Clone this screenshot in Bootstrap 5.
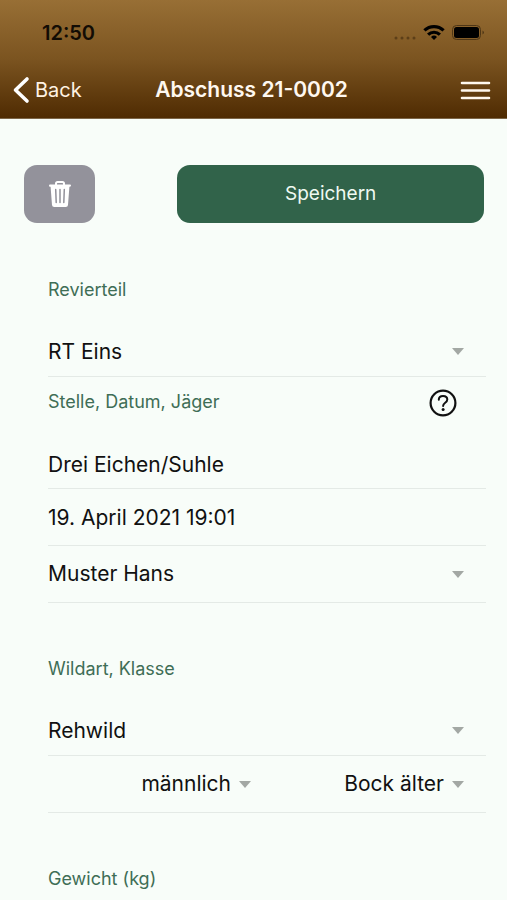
<!DOCTYPE html>
<html lang="de">
<head>
<meta charset="utf-8">
<meta name="viewport" content="width=device-width, initial-scale=1">
<title>Abschuss 21-0002</title>
<link href="https://cdn.jsdelivr.net/npm/bootstrap@5.3.0/dist/css/bootstrap.min.css" rel="stylesheet">
<style>
  body { background: #f8fdf9; color: #111; font-family: Inter, "Liberation Sans", sans-serif; font-size: 21px; line-height: 28px; }
  .app-header { background: linear-gradient(#986f35, #7b5420 50%, #4f2b02); height: 119px; border-bottom: 1px solid #7d6647; }
  .status-line { height: 62px; padding: 4px 23px 0 42px; color: #120c04; }
  .clock { font-size: 20px; font-weight: 600; }
  .title-line { height: 56px; padding: 0 16px 0 12px; color: #fff8f0; }
  .title-line h1 { font-size: 21px; line-height: 28px; font-weight: 600; }
  .side { flex: 1 1 0; }
  .back-link, .back-link:hover { color: #fff3e4; font-size: 20px; }
  .actions { padding: 46px 23px 0 24px; }
  .btn-delete, .btn-save { height: 58px; border-radius: 13px; border: 0; }
  .btn-delete, .btn-delete:hover { width: 71px; background: #93929b; }
  .btn-save, .btn-save:hover { background: #31634a; color: #effaf2; font-size: 19px; }
  .entry-form { padding: 2px 21px 0 48px; }
  .field-group { padding-top: 40px; }
  .field-group + .field-group { padding-top: 41px; }
  .field-group + .joined-group { padding-top: 0; }
  .caption-line { height: 61px; padding-top: 12px; }
  .caption-line label, .caption-line span { font-size: 18px; line-height: 26px; color: #3f6e56; }
  .field-line { border-bottom: 1px solid #e4eae6; }
  .entry { height: 56px; padding: 0; border: 0; border-radius: 0; background-color: transparent; color: #111; font-size: 21px; line-height: 28px; }
  .entry:focus { background-color: transparent; box-shadow: inset 0 -2px #31634a; }
  .entry-low { height: 50px; padding-top: 2px; }
  select.entry { padding-right: 42px; background-image: url("data:image/svg+xml,%3Csvg xmlns='http://www.w3.org/2000/svg' viewBox='0 0 12 7'%3E%3Cpath d='M0 0h12L6 7z' fill='%23a3a8a4'/%3E%3C/svg%3E"); background-size: 12px 7px; background-position: right 22px center; }
  .pair { padding-left: 12px; }
  .pair .entry { text-align-last: right; flex: 1 1 0; min-width: 0; }
  .help-btn { margin-right: 29px; }
</style>
<script src="https://cdn.jsdelivr.net/npm/bootstrap@5.3.0/dist/js/bootstrap.bundle.min.js"></script>
</head>
<body>
<header class="app-header">
  <div class="status-line d-flex align-items-center justify-content-between">
    <span class="clock">12:50</span>
    <div class="d-flex align-items-center">
      <svg width="91" height="18" viewBox="0 0 91 18" role="img" aria-label="WLAN, Akku voll">
        <g fill="#5c3f18"><circle cx="3" cy="14" r="1.500"/><circle cx="9" cy="14" r="1.500"/><circle cx="15" cy="14" r="1.500"/><circle cx="21" cy="14" r="1.500"/></g>
        <g fill="none" stroke="#000" stroke-width="3.2"><path d="M31.4 6.4a14 14 0 0 1 19.2 0"/><path d="M35.1 10.6a8.6 8.6 0 0 1 11.8 0"/></g>
        <path d="M41 16l-3-3.1a4.4 4.4 0 0 1 6 0z" fill="#000"/>
        <rect x="59.500" y="1.500" width="28" height="14" rx="4" fill="none" stroke="#4e3616"/>
        <rect x="61" y="3" width="25" height="11" rx="2.500" fill="#000"/>
        <path d="M89.500 6.500q3 2 0 4z" fill="#4e3616"/>
      </svg>
    </div>
  </div>
  <nav class="title-line d-flex align-items-center">
    <div class="side d-flex">
      <a href="#" class="back-link d-flex align-items-center gap-1 text-decoration-none">
        <svg width="19" height="28" viewBox="0 0 19 28" fill="none" stroke="#fff" stroke-width="3.600" stroke-linecap="round" stroke-linejoin="round" aria-hidden="true"><path d="M15 3L3.500 14 15 25"/></svg>
        Back
      </a>
    </div>
    <h1 class="mb-0 text-nowrap">Abschuss 21-0002</h1>
    <div class="side d-flex justify-content-end">
      <button type="button" class="btn p-0 border-0 d-flex" aria-label="Menü">
        <svg width="31" height="20" viewBox="0 0 31 20" stroke="#fff8ee" stroke-width="2.600" stroke-linecap="round" aria-hidden="true"><path d="M2 3h27M2 10.500h27M2 18h27"/></svg>
      </button>
    </div>
  </nav>
</header>

<main>
  <div class="actions">
    <div class="row g-0 justify-content-between">
      <div class="col-auto">
        <button type="button" class="btn btn-delete p-0 d-flex align-items-center justify-content-center" aria-label="Löschen">
          <svg width="24" height="28" viewBox="0 0 24 28" aria-hidden="true">
            <path d="M8 5V3.600Q8 2 9.600 2h4.800Q16 2 16 3.600V5" fill="none" stroke="#fff" stroke-width="2"/>
            <path d="M1 5.500Q1 4.500 2 4.500h20q1 0 1 1T22 6.800h-.600L20 25q-.200 2-2.200 2H6.200Q4.200 27 4 25L2.600 6.800H2Q1 6.800 1 5.500z" fill="#fff"/>
            <path d="M7.700 9.500l.500 13M12 9.500v13M16.300 9.500l-.500 13" stroke="#93929b" stroke-width="1.500" stroke-linecap="round"/>
          </svg>
        </button>
      </div>
      <div class="col-8">
        <button type="submit" form="entry" class="btn btn-save w-100 p-0">Speichern</button>
      </div>
    </div>
  </div>

  <form id="entry" class="entry-form">
    <section class="field-group">
      <div class="caption-line"><label class="d-block" for="area">Revierteil</label></div>
      <div class="field-line"><select id="area" class="form-select entry entry-low"><option>RT Eins</option></select></div>
    </section>

    <section class="field-group joined-group">
      <div class="caption-line d-flex align-items-start justify-content-between">
        <label for="place">Stelle, Datum, Jäger</label>
        <button type="button" class="btn help-btn p-0 border-0 d-flex" aria-label="Hilfe">
          <svg width="28" height="28" viewBox="0 0 28 28" fill="none" stroke="#111" aria-hidden="true">
            <circle cx="14" cy="14" r="12.400" stroke-width="2.200"/>
            <path d="M9.800 10.700C9.800 8.300 11.600 7 14 7s4.300 1.400 4.300 3.600c0 3.300-4.200 3.100-4.200 6.300" stroke-width="2" stroke-linecap="round"/>
            <circle cx="14.100" cy="20.600" r="1.500" fill="#111" stroke="none"/>
          </svg>
        </button>
      </div>
      <div class="field-line"><input id="place" type="text" class="form-control entry entry-low" value="Drei Eichen/Suhle"></div>
      <div class="field-line"><input type="text" class="form-control entry" aria-label="Datum" value="19. April 2021 19:01"></div>
      <div class="field-line"><select class="form-select entry" aria-label="Jäger"><option>Muster Hans</option></select></div>
    </section>

    <section class="field-group">
      <div class="caption-line"><label class="d-block" for="species">Wildart, Klasse</label></div>
      <div class="field-line"><select id="species" class="form-select entry entry-low"><option>Rehwild</option></select></div>
      <div class="field-line pair d-flex">
        <select class="form-select entry" aria-label="Geschlecht"><option>männlich</option></select>
        <select class="form-select entry" aria-label="Klasse"><option>Bock älter</option></select>
      </div>
    </section>

    <section class="field-group">
      <div class="caption-line h-auto"><span class="d-block">Gewicht (kg)</span></div>
    </section>
  </form>
</main>
</body>
</html>
